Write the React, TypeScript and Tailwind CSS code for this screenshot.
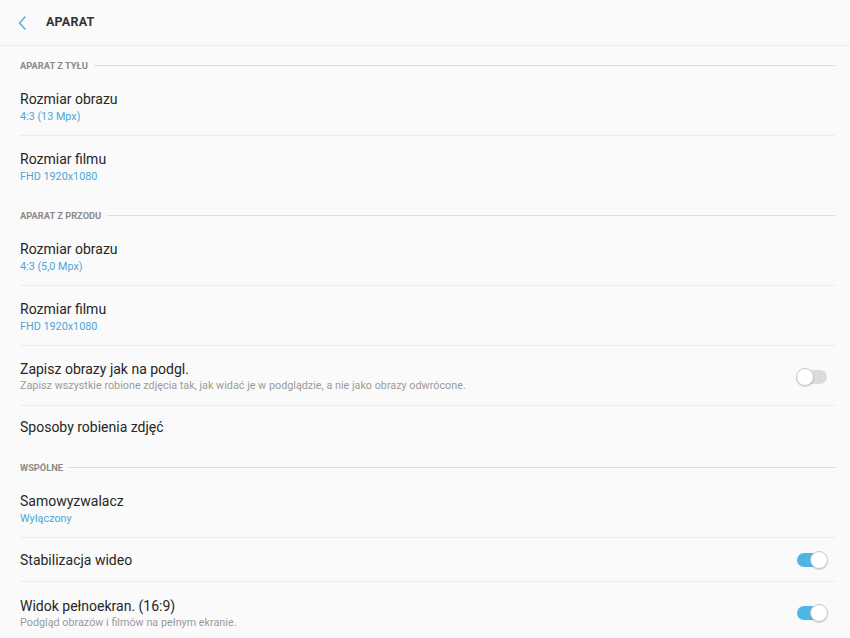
import React from "react";

type Row =
  | { kind: "section"; label: string }
  | { kind: "item"; title: string; sub?: string; desc?: string; toggle?: boolean; divider?: boolean; short?: boolean };

const rows: Row[] = [
  { kind: "section", label: "APARAT Z TYŁU" },
  { kind: "item", title: "Rozmiar obrazu", sub: "4:3 (13 Mpx)", divider: true },
  { kind: "item", title: "Rozmiar filmu", sub: "FHD 1920x1080" },
  { kind: "section", label: "APARAT Z PRZODU" },
  { kind: "item", title: "Rozmiar obrazu", sub: "4:3 (5,0 Mpx)", divider: true },
  { kind: "item", title: "Rozmiar filmu", sub: "FHD 1920x1080", divider: true },
  {
    kind: "item",
    title: "Zapisz obrazy jak na podgl.",
    desc: "Zapisz wszystkie robione zdjęcia tak, jak widać je w podglądzie, a nie jako obrazy odwrócone.",
    toggle: false,
    divider: true,
  },
  { kind: "item", title: "Sposoby robienia zdjęć", short: true },
  { kind: "section", label: "WSPÓLNE" },
  { kind: "item", title: "Samowyzwalacz", sub: "Wyłączony", divider: true },
  { kind: "item", title: "Stabilizacja wideo", toggle: true, divider: true },
  {
    kind: "item",
    title: "Widok pełnoekran. (16:9)",
    desc: "Podgląd obrazów i filmów na pełnym ekranie.",
    toggle: true,
  },
];

function Toggle({ on }: { on: boolean }) {
  return (
    <div className="relative h-[18px] w-[32px] shrink-0">
      <div
        className={`absolute left-[1px] right-[1px] top-[2px] h-[14px] rounded-full ${
          on ? "bg-[#4db6e4]" : "bg-[#dcdcdc]"
        }`}
      />
      <div
        className={`absolute top-0 h-[18px] w-[18px] rounded-full border border-[#c8c8c8] bg-white shadow-[0_1px_1px_rgba(0,0,0,0.15)] ${
          on ? "right-0" : "left-0"
        }`}
      />
    </div>
  );
}

export default function App() {
  return (
    <div className="h-[638px] w-[850px] overflow-hidden bg-[#fafafa] font-['Roboto',sans-serif] text-[#262626]">
      <header className="flex h-[46px] items-center border-b border-[#ebebeb]">
        <svg width="10" height="16" viewBox="0 0 10 16" className="ml-[17px]" fill="none">
          <path d="M8 2L2.5 8L8 14" stroke="#5ab3dc" strokeWidth="1.6" strokeLinecap="round" strokeLinejoin="round" />
        </svg>
        <h1 className="ml-[19px] text-[12.5px] font-bold tracking-[0.2px] text-[#333]">APARAT</h1>
      </header>

      <div className="px-[20px]">
        {rows.map((r, i) =>
          r.kind === "section" ? (
            <div key={i} className="mr-[-5px] flex h-[30px] items-start gap-[6px] pt-[13px]">
              <span className="text-[9.3px] font-bold leading-[13px] text-[#8a8a8a]">{r.label}</span>
              <div className="mt-[6px] h-px flex-1 bg-[#dedede]" />
            </div>
          ) : (
            <div
              key={i}
              className={`mr-[-5px] flex items-center ${
                r.sub || r.desc ? "h-[60px] pt-[2px]" : r.short ? "h-[42px]" : "h-[44px]"
              } ${r.divider ? "border-b border-[#ececec]" : ""}`}
            >
              <div className="flex-1">
                <div className="text-[14px] leading-[18px] text-[#262626]">{r.title}</div>
                {r.sub && <div className="mt-[2px] text-[10.8px] leading-[14px] text-[#4aa7d5]">{r.sub}</div>}
                {r.desc && <div className="mt-[1px] text-[10.8px] leading-[14px] text-[#9a9a9a]">{r.desc}</div>}
              </div>
              {r.toggle !== undefined && (
                <div className="mr-[7px]">
                  <Toggle on={r.toggle} />
                </div>
              )}
            </div>
          )
        )}
      </div>
    </div>
  );
}
